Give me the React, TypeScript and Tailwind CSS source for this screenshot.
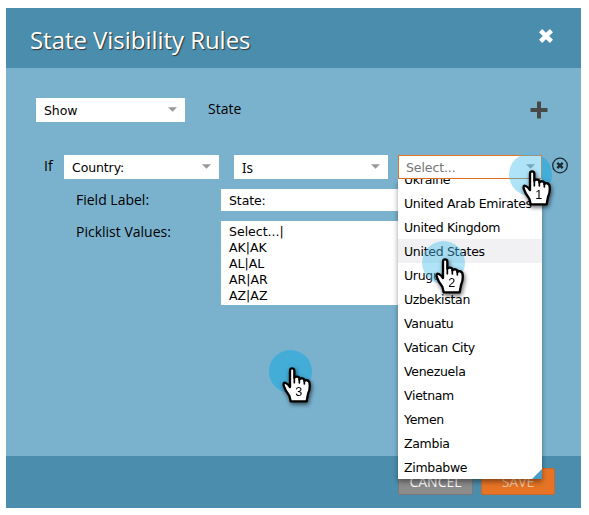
import React from "react";

const countries = [
  "Ukraine",
  "United Arab Emirates",
  "United Kingdom",
  "United States",
  "Uruguay",
  "Uzbekistan",
  "Vanuatu",
  "Vatican City",
  "Venezuela",
  "Vietnam",
  "Yemen",
  "Zambia",
  "Zimbabwe",
];

const picklist = ["Select...|", "AK|AK", "AL|AL", "AR|AR", "AZ|AZ"];

const verdana = "font-[Verdana,'DejaVu_Sans',sans-serif] text-[12.5px]";

function Select({ value, className = "", textClass = "" }: { value: string; className?: string; textClass?: string }) {
  return (
    <div className={`flex h-6 items-center justify-between bg-white pl-2 pr-2 tracking-[-0.1px] ${verdana} ${className}`}>
      <span className={`pt-0.5 ${textClass}`}>{value}</span>
      <svg className="-mt-px" width="9" height="5" viewBox="0 0 9 5">
        <path d="M0 0.2H9L4.5 4.8Z" fill="#999" />
      </svg>
    </div>
  );
}

function Pointer({ n, place, halo }: { n: number; place: string; halo: string }) {
  return (
    <div className={`absolute z-20 h-[43px] w-[43px] ${place}`}>
      <div className={`h-full w-full rounded-full ${halo}`} />
      <svg
        className="absolute left-[11px] top-[15px] overflow-visible drop-shadow-[1px_2px_2px_rgba(0,0,0,0.6)]"
        width="34"
        height="40"
        viewBox="0 0 102 120"
      >
        <path
          d="M30 64V17Q30 10 36 10Q43 10 43 17V38Q51 32 58 38V43Q65 36 73 43V48Q82 42 88 51Q92 70 84 87L80 109H32L28 92Q16 78 11 62Q9 51 17 54Q24 57 30 66Z"
          fill="#fff"
          stroke="#000"
          strokeWidth="7"
          strokeLinejoin="round"
        />
        <path d="M43 36V53M58 39V54M73 44V57" fill="none" stroke="#000" strokeWidth="5" strokeLinecap="round" />
        <text x="56" y="94" textAnchor="middle" fontSize="38" fontFamily="Liberation Sans, Arial, sans-serif">
          {n}
        </text>
      </svg>
    </div>
  );
}

export default function App() {
  return (
    <div className="relative h-[515px] w-[589px] overflow-hidden bg-white pl-1.5 pt-2 font-['Open_Sans',sans-serif] text-black">
      <div className="flex h-[500px] w-[575px] flex-col bg-[#7ab2ce]">
        <header className="flex h-[60px] shrink-0 items-center justify-between bg-[#4a8dad] pl-6 pr-[27px]">
          <h1 className="pt-1 text-[24px] leading-8 tracking-[-0.04px] text-white [text-shadow:1px_1px_1px_#333]">State Visibility Rules</h1>
          <svg className="mb-1" width="16" height="16" viewBox="0 0 16 16">
            <path d="M2.6 2.6L13.4 13.4M13.4 2.6L2.6 13.4" stroke="#fff" strokeWidth="4.4" />
          </svg>
        </header>

        <main className="flex-1 text-[14px]">
          <div className="mt-[30px] flex h-6 items-center pl-[30px]">
            <Select value="Show" className="w-[149px]" />
            <span className="-mt-1 ml-[23px]">State</span>
            <svg className="ml-auto mr-[33px]" width="18" height="18" viewBox="0 0 18 18">
              <path d="M9 0.5V17.5M0.5 9H17.5" stroke="#484848" strokeWidth="4" />
            </svg>
          </div>

          <div className="mt-[33px] flex h-6 items-center pl-[38px]">
            <span className="-mt-1 w-5">If</span>
            <Select value="Country:" className="w-[155px]" />
            <Select value="Is" className="ml-[15px] w-[154px]" textClass="font-['Noto_Sans',sans-serif] text-[13.5px] pt-0" />
            <Select value="Select..." className="ml-2.5 w-36 border border-[#e77425] pl-[7px] pr-[6px] text-[#757575]" />
            <svg className="mb-[3px] ml-[10px]" width="17" height="17" viewBox="0 0 17 17" fill="none" stroke="#1c2a32">
              <circle cx="8" cy="8.5" r="7.3" strokeWidth="1.3" />
              <path d="M5.3 5.8L10.7 11.2M10.7 5.8L5.3 11.2" strokeWidth="2.4" />
            </svg>
          </div>

          <div className="mt-2.5 flex h-[22px] items-center pl-[70px]">
            <span className="-mt-0.5 w-[145px]">Field Label:</span>
            <div className={`flex h-[22px] w-[180px] items-center bg-white pl-2 pt-0.5 tracking-[-0.1px] ${verdana}`}>State:</div>
          </div>

          <div className="mt-2.5 flex pl-[70px]">
            <span className="w-[145px] leading-[21px]">Picklist Values:</span>
            <div className={`h-[84px] w-[180px] bg-white pl-2 pt-[3px] ${verdana}`}>
              {picklist.map((p) => (
                <div key={p} className="h-4 leading-4">{p}</div>
              ))}
            </div>
          </div>
        </main>

        <footer className="flex h-[52px] shrink-0 gap-2 bg-[#4a8dad] pl-[392px] pt-3 text-[14px]">
          <button className="h-[27px] w-[75px] rounded-[2px] border border-[#79797b] bg-[#8c8c8c] leading-[26px] text-white">CANCEL</button>
          <button className="h-[27px] w-[74px] rounded-[2px] border border-[#c46a31] bg-[#e77425] leading-[26px] text-[#f6c49f]">SAVE</button>
        </footer>
      </div>

      <div className={`absolute left-[398px] top-[179px] z-10 h-[300px] w-36 bg-white tracking-[-0.3px] shadow-[0_3px_5px_rgba(0,0,0,0.4)] ${verdana}`}>
        <div className="h-full overflow-hidden">
          <ul className="-mt-3">
            {countries.map((c) => (
              <li
                key={c}
                className={`h-6 whitespace-nowrap pl-1.5 leading-[25px] ${c === "United States" ? "bg-[#f1f1f3]" : ""}`}
              >
                {c}
              </li>
            ))}
          </ul>
        </div>
        <svg className="absolute bottom-0 right-0" width="10" height="10" viewBox="0 0 10 10">
          <path d="M10 0V10H0Z" fill="#4b9cc5" />
        </svg>
      </div>

      <Pointer n={1} place="left-[509px] top-[153px]" halo="bg-[linear-gradient(to_right,rgba(69,190,237,0.43)_77%,#43acd7_77%)]" />
      <Pointer n={2} place="left-[422px] top-[241px]" halo="bg-[rgba(69,190,237,0.43)]" />
      <Pointer n={3} place="left-[269px] top-[350px]" halo="bg-[#43acd7]" />
    </div>
  );
}
